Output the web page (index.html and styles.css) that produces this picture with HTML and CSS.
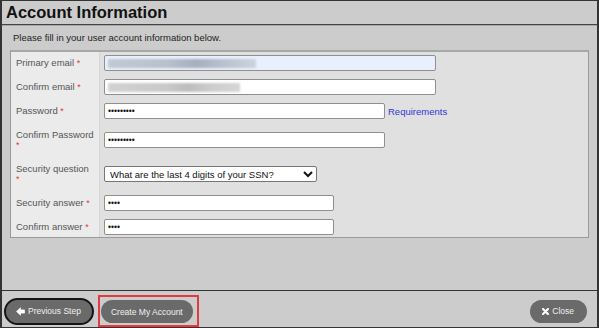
FILE: index.html
```html
<!DOCTYPE html>
<html lang="en">
<head>
  <meta charset="UTF-8">
  <title>Account Information</title>
  <link rel="stylesheet" href="styles.css">
</head>
<body>

  <div class="dialog">
    <div class="titlebar">
      <h1>Account Information</h1>
    </div>

    <div class="content">
      <p class="intro">Please fill in your user account information below.</p>

      <div class="form-box">
        <div class="row">
          <label><span>Primary email <span class="req">*</span></span></label>
          <div class="field">
            <div class="input input-wide autofill"><span class="blur blur-blue"></span></div>
          </div>
        </div>

        <div class="row">
          <label><span>Confirm email <span class="req">*</span></span></label>
          <div class="field">
            <div class="input input-wide"><span class="blur blur-gray"></span></div>
          </div>
        </div>

        <div class="row">
          <label><span>Password <span class="req">*</span></span></label>
          <div class="field">
            <input class="input input-pass" type="password" value="password1">
            <a class="link" href="#">Requirements</a>
          </div>
        </div>

        <div class="row spaced">
          <label><span>Confirm Password<br><span class="req">*</span></span></label>
          <div class="field">
            <input class="input input-pass" type="password" value="password1">
          </div>
        </div>

        <div class="row spaced-more">
          <label><span>Security question<br><span class="req">*</span></span></label>
          <div class="field">
            <select class="select">
              <option>What are the last 4 digits of your SSN?</option>
            </select>
          </div>
        </div>

        <div class="row spaced">
          <label><span>Security answer <span class="req">*</span></span></label>
          <div class="field">
            <input class="input input-answer" type="password" value="1234">
          </div>
        </div>

        <div class="row">
          <label><span>Confirm answer <span class="req">*</span></span></label>
          <div class="field">
            <input class="input input-answer" type="password" value="1234">
          </div>
        </div>
      </div>
    </div>

    <div class="footer">
      <button class="btn btn-prev">
        <svg width="9" height="9" viewBox="0 0 10 10"><path d="M0.6 5 L5 0.9 L5 3.2 L9.4 3.2 L9.4 6.8 L5 6.8 L5 9.1 Z" fill="#fff" stroke="#fff" stroke-width="0.8" stroke-linejoin="round"/></svg>
        Previous Step
      </button>
      <span class="highlight">
        <button class="btn">Create My Account</button>
      </span>
      <button class="btn btn-close">
        <svg width="7" height="7" viewBox="0 0 10 10"><path d="M1.5 1.5 L8.5 8.5 M8.5 1.5 L1.5 8.5" stroke="#fff" stroke-width="3" stroke-linecap="round"/></svg>
        Close
      </button>
    </div>
  </div>

</body>
</html>
```

FILE: styles.css
```css
* {
  box-sizing: border-box;
}

body {
  margin: 0;
  background: #cccccc;
  font-family: "Liberation Sans", Arial, sans-serif;
}

.dialog {
  width: 599px;
  height: 328px;
  border: solid #333;
  border-width: 1px 2px 1px 2px;
  background: #cccccc;
  display: flex;
  flex-direction: column;
}

.titlebar {
  height: 24px;
  border-bottom: 1px solid #444;
  padding-left: 4px;
}

.titlebar h1 {
  margin: 0;
  font-size: 16.5px;
  line-height: 23px;
  font-weight: bold;
  color: #111;
}

.content {
  flex: 1;
  border-top: 1px solid #a9a9a9;
  padding: 0 8px;
}

.intro {
  margin: 6px 0 6px 3px;
  font-size: 9.5px;
  line-height: 12px;
  color: #222;
}

.form-box {
  border: 1px solid #9a9a9a;
  border-top: 2px solid #a8a8a8;
  padding: 3px 0 2px;
  background: linear-gradient(to right, #ebebeb 88px, #d5d5d5 88px, #d5d5d5 89px, #e0e0e0 89px);
}

.row {
  display: grid;
  grid-template-columns: 89px 1fr;
  height: 16px;
}

.row + .row {
  margin-top: 8px;
}

.row.spaced {
  margin-top: 13px;
}

.row.spaced-more {
  margin-top: 18px;
}

.row label {
  height: 16px;
  display: flex;
  align-items: center;
  padding-left: 5px;
  font-size: 9.5px;
  line-height: 10px;
  color: #555;
  white-space: nowrap;
}

.req {
  color: #e53935;
  font-size: 9px;
}

.field {
  display: flex;
  align-items: center;
  padding-left: 4px;
}

.input {
  height: 16px;
  border: 1px solid #8f8f8f;
  border-radius: 2px;
  background: #fff;
  padding: 0 3px;
  font-family: "Liberation Sans", Arial, sans-serif;
  font-size: 8.5px;
  color: #111;
  display: flex;
  align-items: center;
}

.input-wide {
  width: 332px;
}

.input-pass {
  width: 281px;
}

.input-answer {
  width: 230px;
}

.autofill {
  background: #e8f0fe;
}

.blur {
  display: block;
  height: 9px;
  filter: blur(1px);
}

.blur-blue {
  width: 148px;
  background: linear-gradient(to right, #c3c9d4, #b9c0cc 40%, #a7afbd 60%, #bcc3cf 80%, #cdd3de);
}

.blur-gray {
  width: 132px;
  background: linear-gradient(to right, #d2d2d2, #c9c9c9 45%, #bdbdbd 60%, #cecece 80%, #d6d6d6);
}

.link {
  margin-left: 3px;
  font-size: 9.5px;
  color: #3434d4;
  text-decoration: none;
}

.select {
  width: 213px;
  height: 16px;
  border: 1px solid #767676;
  border-radius: 2px;
  background: #fff;
  padding: 0 0 0 1px;
  font-family: "Liberation Sans", Arial, sans-serif;
  font-size: 9.5px;
  color: #111;
}

.footer {
  height: 37px;
  border-top: 1px solid #333;
  padding: 4px 10px 0 2px;
  display: flex;
  align-items: center;
  gap: 4px;
}

.btn {
  display: inline-flex;
  align-items: center;
  gap: 3px;
  height: 23px;
  padding: 0 10px;
  border: none;
  border-radius: 12px;
  background: #6a6a6a;
  color: #f0f0f0;
  font-family: "Liberation Sans", Arial, sans-serif;
  font-size: 8.5px;
  cursor: pointer;
}

.btn-prev {
  height: 27px;
  border: 2px solid #151515;
  border-radius: 14px;
  padding: 0 11px 0 10px;
}

.highlight {
  display: flex;
  border: 2px solid #e23b3f;
  padding: 3px 4px 2px 1px;
}

.btn-close {
  margin-left: auto;
  padding: 0 13px 0 12px;
}
```
